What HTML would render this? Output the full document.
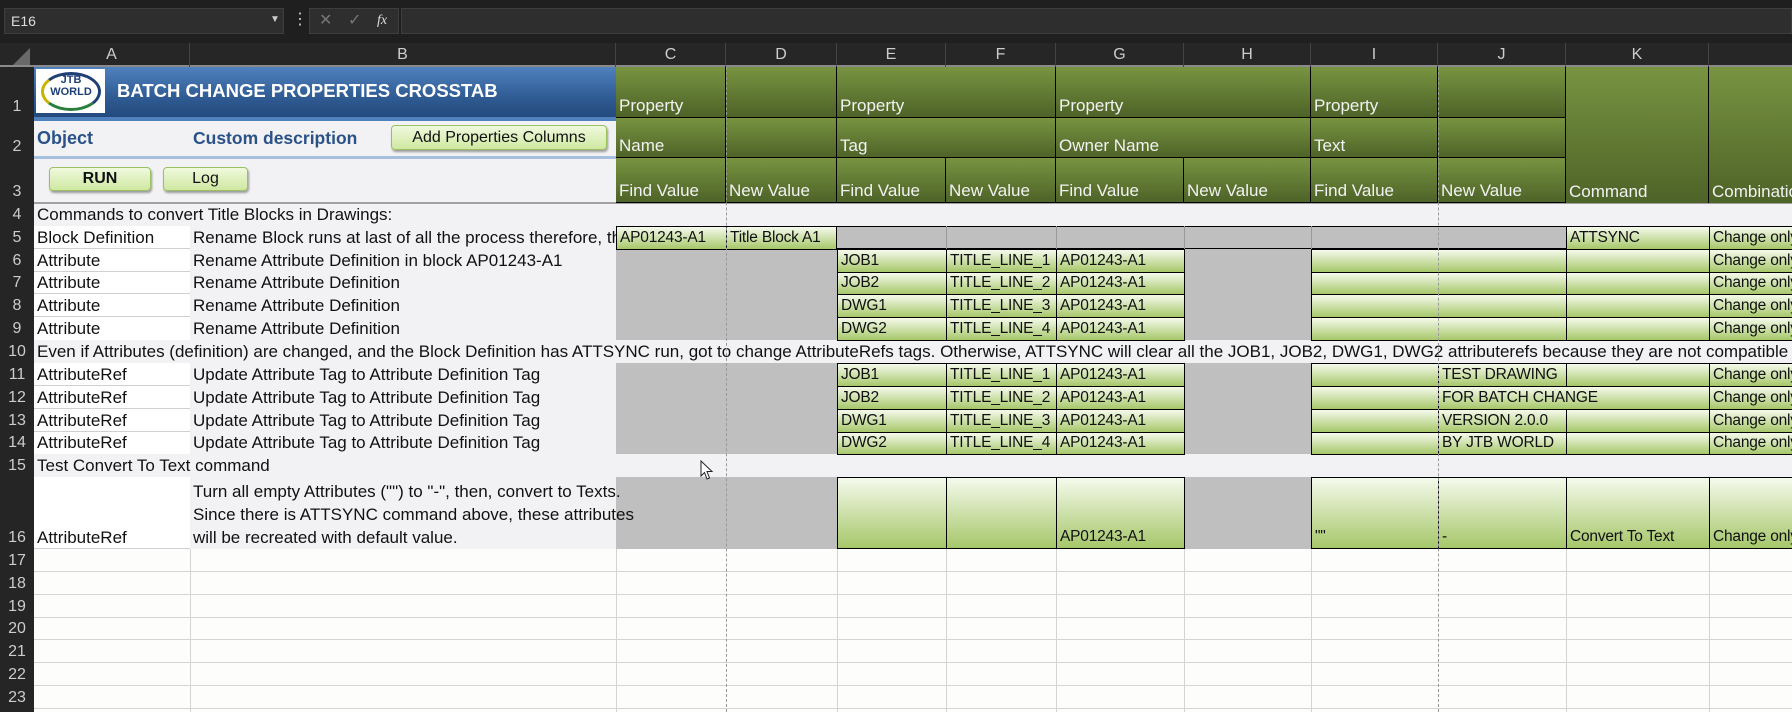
<!DOCTYPE html>
<html><head><meta charset="utf-8"><style>
*{margin:0;padding:0;box-sizing:border-box}
html,body{width:1792px;height:712px;overflow:hidden}
body{background:#fdfdfb;position:relative;font-family:"Liberation Sans Narrow","Liberation Sans",sans-serif;}
.a{position:absolute}
.c{position:absolute;font-size:17px;color:#111;display:flex;align-items:flex-end;padding:0 0 1px 3px;white-space:nowrap;line-height:20px;overflow:hidden}
.g{background:linear-gradient(#f5faec,#a6c76a);border:1px solid #000;font-size:15.5px;letter-spacing:-0.2px}
.x{background:#bfbfbf}
.h{background:linear-gradient(#789441,#4e6328);color:#f2f2f2;border-right:1px solid #000;border-bottom:1px solid #000}
.rh{position:absolute;left:0;width:34px;color:#ccc;font-size:16px;text-align:center;display:flex;align-items:flex-end;justify-content:center;padding-bottom:2px}
.ch{position:absolute;top:43px;height:24px;color:#ccc;font-size:16px;text-align:center;line-height:24px;border-right:1px solid #444}
.btn{position:absolute;background:linear-gradient(#f0f9de,#cfe8a0);border:1px solid #9bbf63;border-radius:4px;box-shadow:1px 2px 2px #9a9a9a;font-size:16px;text-align:center;color:#111}
.hl{position:absolute;left:34px;width:1758px;height:1px;background:#d4d4d4}
.vl{position:absolute;top:549px;height:163px;width:1px;background:#d4d4d4}
</style></head><body>
<div class="a" style="left:0;top:0;width:1792px;height:43px;background:#1f1f1f"></div>
<div class="a" style="left:4px;top:8px;width:280px;height:26px;background:#2e2e2e;border:1px solid #3e3e3e;color:#ddd;font-size:14px;line-height:24px;padding-left:6px">E16</div>
<div class="a" style="left:270px;top:8px;width:14px;height:26px;color:#ccc;font-size:10px;line-height:24px">▼</div>
<div class="a" style="left:292px;top:8px;color:#ccc;font-size:16px;line-height:24px">⋮</div>
<div class="a" style="left:309px;top:8px;width:90px;height:26px;background:#2e2e2e;border:1px solid #3e3e3e;color:#777;font-size:16px;line-height:24px"><span style="position:absolute;left:9px">✕</span><span style="position:absolute;left:38px">✓</span><span style="position:absolute;left:67px;color:#ddd;font-style:italic;font-family:'Liberation Serif',serif;font-size:14px">fx</span></div>
<div class="a" style="left:401px;top:8px;width:1391px;height:26px;background:#2e2e2e;border:1px solid #3e3e3e"></div>
<div class="a" style="left:0;top:43px;width:1792px;height:24px;background:#262626;border-bottom:2px solid #8a8a8a"></div>
<div class="a" style="left:13px;top:48px;width:0;height:0;border-left:17px solid transparent;border-bottom:17px solid #6a6a6a"></div>
<div class="ch" style="left:34px;width:156px">A</div>
<div class="ch" style="left:190px;width:426px">B</div>
<div class="ch" style="left:616px;width:110px">C</div>
<div class="ch" style="left:726px;width:111px">D</div>
<div class="ch" style="left:837px;width:109px">E</div>
<div class="ch" style="left:946px;width:110px">F</div>
<div class="ch" style="left:1056px;width:128px">G</div>
<div class="ch" style="left:1184px;width:127px">H</div>
<div class="ch" style="left:1311px;width:127px">I</div>
<div class="ch" style="left:1438px;width:128px">J</div>
<div class="ch" style="left:1566px;width:143px">K</div>
<div class="a" style="left:0;top:67px;width:34px;height:645px;background:#252525"></div>
<div class="rh" style="top:67px;height:51px">1</div>
<div class="rh" style="top:118px;height:40px">2</div>
<div class="rh" style="top:158px;height:45px">3</div>
<div class="rh" style="top:203px;height:23px">4</div>
<div class="rh" style="top:226px;height:23px">5</div>
<div class="rh" style="top:249px;height:23px">6</div>
<div class="rh" style="top:272px;height:22px">7</div>
<div class="rh" style="top:294px;height:23px">8</div>
<div class="rh" style="top:317px;height:23px">9</div>
<div class="rh" style="top:340px;height:23px">10</div>
<div class="rh" style="top:363px;height:23px">11</div>
<div class="rh" style="top:386px;height:23px">12</div>
<div class="rh" style="top:409px;height:23px">13</div>
<div class="rh" style="top:432px;height:22px">14</div>
<div class="rh" style="top:454px;height:23px">15</div>
<div class="rh" style="top:477px;height:72px">16</div>
<div class="rh" style="top:549px;height:23px">17</div>
<div class="rh" style="top:572px;height:23px">18</div>
<div class="rh" style="top:595px;height:23px">19</div>
<div class="rh" style="top:618px;height:22px">20</div>
<div class="rh" style="top:640px;height:23px">21</div>
<div class="rh" style="top:663px;height:23px">22</div>
<div class="rh" style="top:686px;height:23px">23</div>
<div class="a" style="left:34px;top:67px;width:1758px;height:482px;background:#f2f2f4"></div>
<div class="a" style="left:34px;top:202px;width:1758px;height:2px;background:#a0a0a0"></div>
<div class="hl" style="top:571px"></div><div class="hl" style="top:594px"></div><div class="hl" style="top:617px"></div><div class="hl" style="top:639px"></div><div class="hl" style="top:662px"></div><div class="hl" style="top:685px"></div><div class="hl" style="top:708px"></div>
<div class="vl" style="left:190px"></div><div class="vl" style="left:616px"></div><div class="vl" style="left:837px"></div><div class="vl" style="left:946px"></div><div class="vl" style="left:1056px"></div><div class="vl" style="left:1184px"></div><div class="vl" style="left:1311px"></div><div class="vl" style="left:1566px"></div><div class="vl" style="left:1709px"></div>
<div class="a" style="left:34px;top:67px;width:582px;height:51px;background:linear-gradient(#4f81bd,#2f5b93 60%,#23497c)"></div>
<div class="a" style="left:34px;top:117px;width:582px;height:4px;background:#4f81bd"></div>
<div class="a" style="left:34px;top:156px;width:582px;height:3px;background:#a7bfde"></div>
<div class="a" style="left:36px;top:69px;width:69px;height:44px;background:#fff"></div>
<div class="a" style="left:41px;top:72px;width:60px;height:39px;border:3px solid #1f3f77;border-radius:50%;border-left-color:#c8b400;border-bottom-color:#2a7f3a"></div>
<div class="a" style="left:41px;top:74px;width:60px;text-align:center;font-weight:bold;font-size:11px;line-height:12px;color:#1f3f77">JTB<br>WORLD</div>
<div class="a" style="left:117px;top:80px;color:#fff;font-weight:bold;font-size:18.5px">BATCH CHANGE PROPERTIES CROSSTAB</div>
<div class="a" style="left:37px;top:128px;color:#2a5288;font-weight:bold;font-size:18px">Object</div>
<div class="a" style="left:193px;top:128px;color:#2a5288;font-weight:bold;font-size:17.5px">Custom description</div>
<div class="btn" style="left:391px;top:125px;width:216px;height:25px;line-height:23px">Add Properties Columns</div>
<div class="btn" style="left:49px;top:167px;width:102px;height:24px;line-height:22px;font-weight:bold">RUN</div>
<div class="btn" style="left:163px;top:167px;width:85px;height:24px;line-height:22px">Log</div>
<div class="c h" style="left:616px;top:67px;width:110px;height:51px">Property</div>
<div class="c h" style="left:726px;top:67px;width:111px;height:51px"></div>
<div class="c h" style="left:837px;top:67px;width:219px;height:51px">Property</div>
<div class="c h" style="left:1056px;top:67px;width:255px;height:51px">Property</div>
<div class="c h" style="left:1311px;top:67px;width:127px;height:51px">Property</div>
<div class="c h" style="left:1438px;top:67px;width:128px;height:51px"></div>
<div class="c h" style="left:616px;top:118px;width:110px;height:40px">Name</div>
<div class="c h" style="left:726px;top:118px;width:111px;height:40px"></div>
<div class="c h" style="left:837px;top:118px;width:219px;height:40px">Tag</div>
<div class="c h" style="left:1056px;top:118px;width:255px;height:40px">Owner Name</div>
<div class="c h" style="left:1311px;top:118px;width:127px;height:40px">Text</div>
<div class="c h" style="left:1438px;top:118px;width:128px;height:40px"></div>
<div class="c h" style="left:616px;top:158px;width:110px;height:45px">Find Value</div>
<div class="c h" style="left:726px;top:158px;width:111px;height:45px">New Value</div>
<div class="c h" style="left:837px;top:158px;width:109px;height:45px">Find Value</div>
<div class="c h" style="left:946px;top:158px;width:110px;height:45px">New Value</div>
<div class="c h" style="left:1056px;top:158px;width:128px;height:45px">Find Value</div>
<div class="c h" style="left:1184px;top:158px;width:127px;height:45px">New Value</div>
<div class="c h" style="left:1311px;top:158px;width:127px;height:45px">Find Value</div>
<div class="c h" style="left:1438px;top:158px;width:128px;height:45px">New Value</div>
<div class="c h" style="left:1566px;top:67px;width:143px;height:136px;border-bottom:none">Command</div>
<div class="c h" style="left:1709px;top:67px;width:83px;height:136px;border:none">Combination</div>
<div class="c" style="left:34px;top:203px;height:23px">Commands to convert Title Blocks in Drawings:</div>
<div class="a" style="left:34px;top:226px;width:156px;height:114px;background:#fff"></div>
<div class="a" style="left:34px;top:363px;width:156px;height:91px;background:#fff"></div>
<div class="a" style="left:34px;top:477px;width:156px;height:72px;background:#fff"></div>
<div class="a" style="left:34px;top:248px;width:156px;height:1px;background:#d0d0d0"></div>
<div class="a" style="left:34px;top:271px;width:156px;height:1px;background:#d0d0d0"></div>
<div class="a" style="left:34px;top:293px;width:156px;height:1px;background:#d0d0d0"></div>
<div class="a" style="left:34px;top:316px;width:156px;height:1px;background:#d0d0d0"></div>
<div class="a" style="left:34px;top:385px;width:156px;height:1px;background:#d0d0d0"></div>
<div class="a" style="left:34px;top:408px;width:156px;height:1px;background:#d0d0d0"></div>
<div class="a" style="left:34px;top:431px;width:156px;height:1px;background:#d0d0d0"></div>
<div class="a" style="left:34px;top:548px;width:156px;height:1px;background:#d0d0d0"></div>
<div class="a x" style="left:616px;top:249px;width:221px;height:91px"></div>
<div class="a x" style="left:616px;top:363px;width:221px;height:91px"></div>
<div class="a x" style="left:616px;top:477px;width:221px;height:72px"></div>
<div class="a x" style="left:1184px;top:249px;width:127px;height:91px"></div>
<div class="a x" style="left:1184px;top:363px;width:127px;height:91px"></div>
<div class="a x" style="left:1184px;top:477px;width:127px;height:72px"></div>
<div class="a x" style="left:837px;top:226px;width:729px;height:23px"></div>
<div class="a" style="left:836px;top:226px;width:731px;height:23px;border-top:1px solid #000;border-bottom:1px solid #000"></div>
<div class="a" style="left:946px;top:226px;width:1px;height:23px;background:#999"></div>
<div class="a" style="left:1056px;top:226px;width:1px;height:23px;background:#999"></div>
<div class="a" style="left:1184px;top:226px;width:1px;height:23px;background:#999"></div>
<div class="a" style="left:1311px;top:226px;width:1px;height:23px;background:#999"></div>
<div class="c" style="left:34px;top:226px;height:23px">Block Definition</div>
<div class="c" style="left:190px;top:226px;height:23px;width:426px">Rename Block runs at last of all the process therefore, the owner</div>
<div class="c g" style="left:616px;top:226px;width:111px;height:24px">AP01243-A1</div>
<div class="c g" style="left:726px;top:226px;width:111px;height:24px">Title Block A1</div>
<div class="c g" style="left:1566px;top:226px;width:144px;height:24px">ATTSYNC</div>
<div class="c g" style="left:1709px;top:226px;width:83px;height:24px;border-right:none">Change only</div>
<div class="c" style="left:34px;top:249px;height:23px">Attribute</div>
<div class="c" style="left:190px;top:249px;height:23px">Rename Attribute Definition in block AP01243-A1</div>
<div class="c" style="left:34px;top:272px;height:22px">Attribute</div>
<div class="c" style="left:190px;top:272px;height:22px">Rename Attribute Definition</div>
<div class="c" style="left:34px;top:294px;height:23px">Attribute</div>
<div class="c" style="left:190px;top:294px;height:23px">Rename Attribute Definition</div>
<div class="c" style="left:34px;top:317px;height:23px">Attribute</div>
<div class="c" style="left:190px;top:317px;height:23px">Rename Attribute Definition</div>
<div class="c g" style="left:837px;top:249px;width:110px;height:24px">JOB1</div><div class="c g" style="left:946px;top:249px;width:111px;height:24px">TITLE_LINE_1</div><div class="c g" style="left:1056px;top:249px;width:129px;height:24px">AP01243-A1</div>
<div class="c g" style="left:837px;top:272px;width:110px;height:23px">JOB2</div><div class="c g" style="left:946px;top:272px;width:111px;height:23px">TITLE_LINE_2</div><div class="c g" style="left:1056px;top:272px;width:129px;height:23px">AP01243-A1</div>
<div class="c g" style="left:837px;top:294px;width:110px;height:24px">DWG1</div><div class="c g" style="left:946px;top:294px;width:111px;height:24px">TITLE_LINE_3</div><div class="c g" style="left:1056px;top:294px;width:129px;height:24px">AP01243-A1</div>
<div class="c g" style="left:837px;top:317px;width:110px;height:24px">DWG2</div><div class="c g" style="left:946px;top:317px;width:111px;height:24px">TITLE_LINE_4</div><div class="c g" style="left:1056px;top:317px;width:129px;height:24px">AP01243-A1</div>
<div class="c g" style="left:1311px;top:249px;width:256px;height:24px"></div><div class="c g" style="left:1566px;top:249px;width:144px;height:24px"></div><div class="c g" style="left:1709px;top:249px;width:83px;height:24px;border-right:none">Change only</div>
<div class="c g" style="left:1311px;top:272px;width:256px;height:23px"></div><div class="c g" style="left:1566px;top:272px;width:144px;height:23px"></div><div class="c g" style="left:1709px;top:272px;width:83px;height:23px;border-right:none">Change only</div>
<div class="c g" style="left:1311px;top:294px;width:256px;height:24px"></div><div class="c g" style="left:1566px;top:294px;width:144px;height:24px"></div><div class="c g" style="left:1709px;top:294px;width:83px;height:24px;border-right:none">Change only</div>
<div class="c g" style="left:1311px;top:317px;width:256px;height:24px"></div><div class="c g" style="left:1566px;top:317px;width:144px;height:24px"></div><div class="c g" style="left:1709px;top:317px;width:83px;height:24px;border-right:none">Change only</div>
<div class="c" style="left:34px;top:340px;height:23px;width:1758px">Even if Attributes (definition) are changed, and the Block Definition has ATTSYNC run, got to change AttributeRefs tags. Otherwise, ATTSYNC will clear all the JOB1, JOB2, DWG1, DWG2 attributerefs because they are not compatible with the new Block Definition</div>
<div class="c" style="left:34px;top:363px;height:23px">AttributeRef</div><div class="c" style="left:190px;top:363px;height:23px">Update Attribute Tag to Attribute Definition Tag</div>
<div class="c" style="left:34px;top:386px;height:23px">AttributeRef</div><div class="c" style="left:190px;top:386px;height:23px">Update Attribute Tag to Attribute Definition Tag</div>
<div class="c" style="left:34px;top:409px;height:23px">AttributeRef</div><div class="c" style="left:190px;top:409px;height:23px">Update Attribute Tag to Attribute Definition Tag</div>
<div class="c" style="left:34px;top:432px;height:22px">AttributeRef</div><div class="c" style="left:190px;top:432px;height:22px">Update Attribute Tag to Attribute Definition Tag</div>
<div class="c g" style="left:837px;top:363px;width:110px;height:24px">JOB1</div><div class="c g" style="left:946px;top:363px;width:111px;height:24px">TITLE_LINE_1</div><div class="c g" style="left:1056px;top:363px;width:129px;height:24px">AP01243-A1</div>
<div class="c g" style="left:837px;top:386px;width:110px;height:24px">JOB2</div><div class="c g" style="left:946px;top:386px;width:111px;height:24px">TITLE_LINE_2</div><div class="c g" style="left:1056px;top:386px;width:129px;height:24px">AP01243-A1</div>
<div class="c g" style="left:837px;top:409px;width:110px;height:24px">DWG1</div><div class="c g" style="left:946px;top:409px;width:111px;height:24px">TITLE_LINE_3</div><div class="c g" style="left:1056px;top:409px;width:129px;height:24px">AP01243-A1</div>
<div class="c g" style="left:837px;top:432px;width:110px;height:23px">DWG2</div><div class="c g" style="left:946px;top:432px;width:111px;height:23px">TITLE_LINE_4</div><div class="c g" style="left:1056px;top:432px;width:129px;height:23px">AP01243-A1</div>
<div class="c g" style="left:1311px;top:363px;width:128px;height:24px"></div><div class="c g" style="left:1438px;top:363px;width:129px;height:24px">TEST DRAWING</div><div class="c g" style="left:1566px;top:363px;width:144px;height:24px"></div><div class="c g" style="left:1709px;top:363px;width:83px;height:24px;border-right:none">Change only</div>
<div class="c g" style="left:1311px;top:386px;width:128px;height:24px"></div><div class="c g" style="left:1438px;top:386px;width:272px;height:24px">FOR BATCH CHANGE</div><div class="c g" style="left:1709px;top:386px;width:83px;height:24px;border-right:none">Change only</div>
<div class="c g" style="left:1311px;top:409px;width:128px;height:24px"></div><div class="c g" style="left:1438px;top:409px;width:129px;height:24px">VERSION 2.0.0</div><div class="c g" style="left:1566px;top:409px;width:144px;height:24px"></div><div class="c g" style="left:1709px;top:409px;width:83px;height:24px;border-right:none">Change only</div>
<div class="c g" style="left:1311px;top:432px;width:128px;height:23px"></div><div class="c g" style="left:1438px;top:432px;width:129px;height:23px">BY JTB WORLD</div><div class="c g" style="left:1566px;top:432px;width:144px;height:23px"></div><div class="c g" style="left:1709px;top:432px;width:83px;height:23px;border-right:none">Change only</div>
<div class="c" style="left:34px;top:454px;height:23px">Test Convert To Text command</div>
<div class="c" style="left:34px;top:477px;height:72px">AttributeRef</div>
<div class="a" style="left:193px;top:480px;font-size:17px;line-height:23px;color:#111">Turn all empty Attributes ("") to "-", then, convert to Texts.<br>Since there is ATTSYNC command above, these attributes<br>will be recreated with default value.</div>
<div class="c g" style="left:837px;top:477px;width:110px;height:72px"></div>
<div class="c g" style="left:946px;top:477px;width:111px;height:72px"></div>
<div class="c g" style="left:1056px;top:477px;width:129px;height:72px">AP01243-A1</div>
<div class="c g" style="left:1311px;top:477px;width:128px;height:72px">""</div>
<div class="c g" style="left:1438px;top:477px;width:129px;height:72px">-</div>
<div class="c g" style="left:1566px;top:477px;width:144px;height:72px">Convert To Text</div>
<div class="c g" style="left:1709px;top:477px;width:83px;height:72px;border-right:none">Change only</div>
<div class="a" style="left:726px;top:67px;width:0;height:645px;border-left:1px dashed #9a9a9a"></div>
<div class="a" style="left:1438px;top:67px;width:0;height:645px;border-left:1px dashed #9a9a9a"></div>
<svg class="a" style="left:700px;top:460px" width="14" height="22" viewBox="0 0 14 22"><path d="M1 1 L1 16 L4.5 12.5 L7 19 L9.5 18 L7 11.5 L12 11.5 Z" fill="#fff" stroke="#222" stroke-width="1"/></svg>
</body></html>
